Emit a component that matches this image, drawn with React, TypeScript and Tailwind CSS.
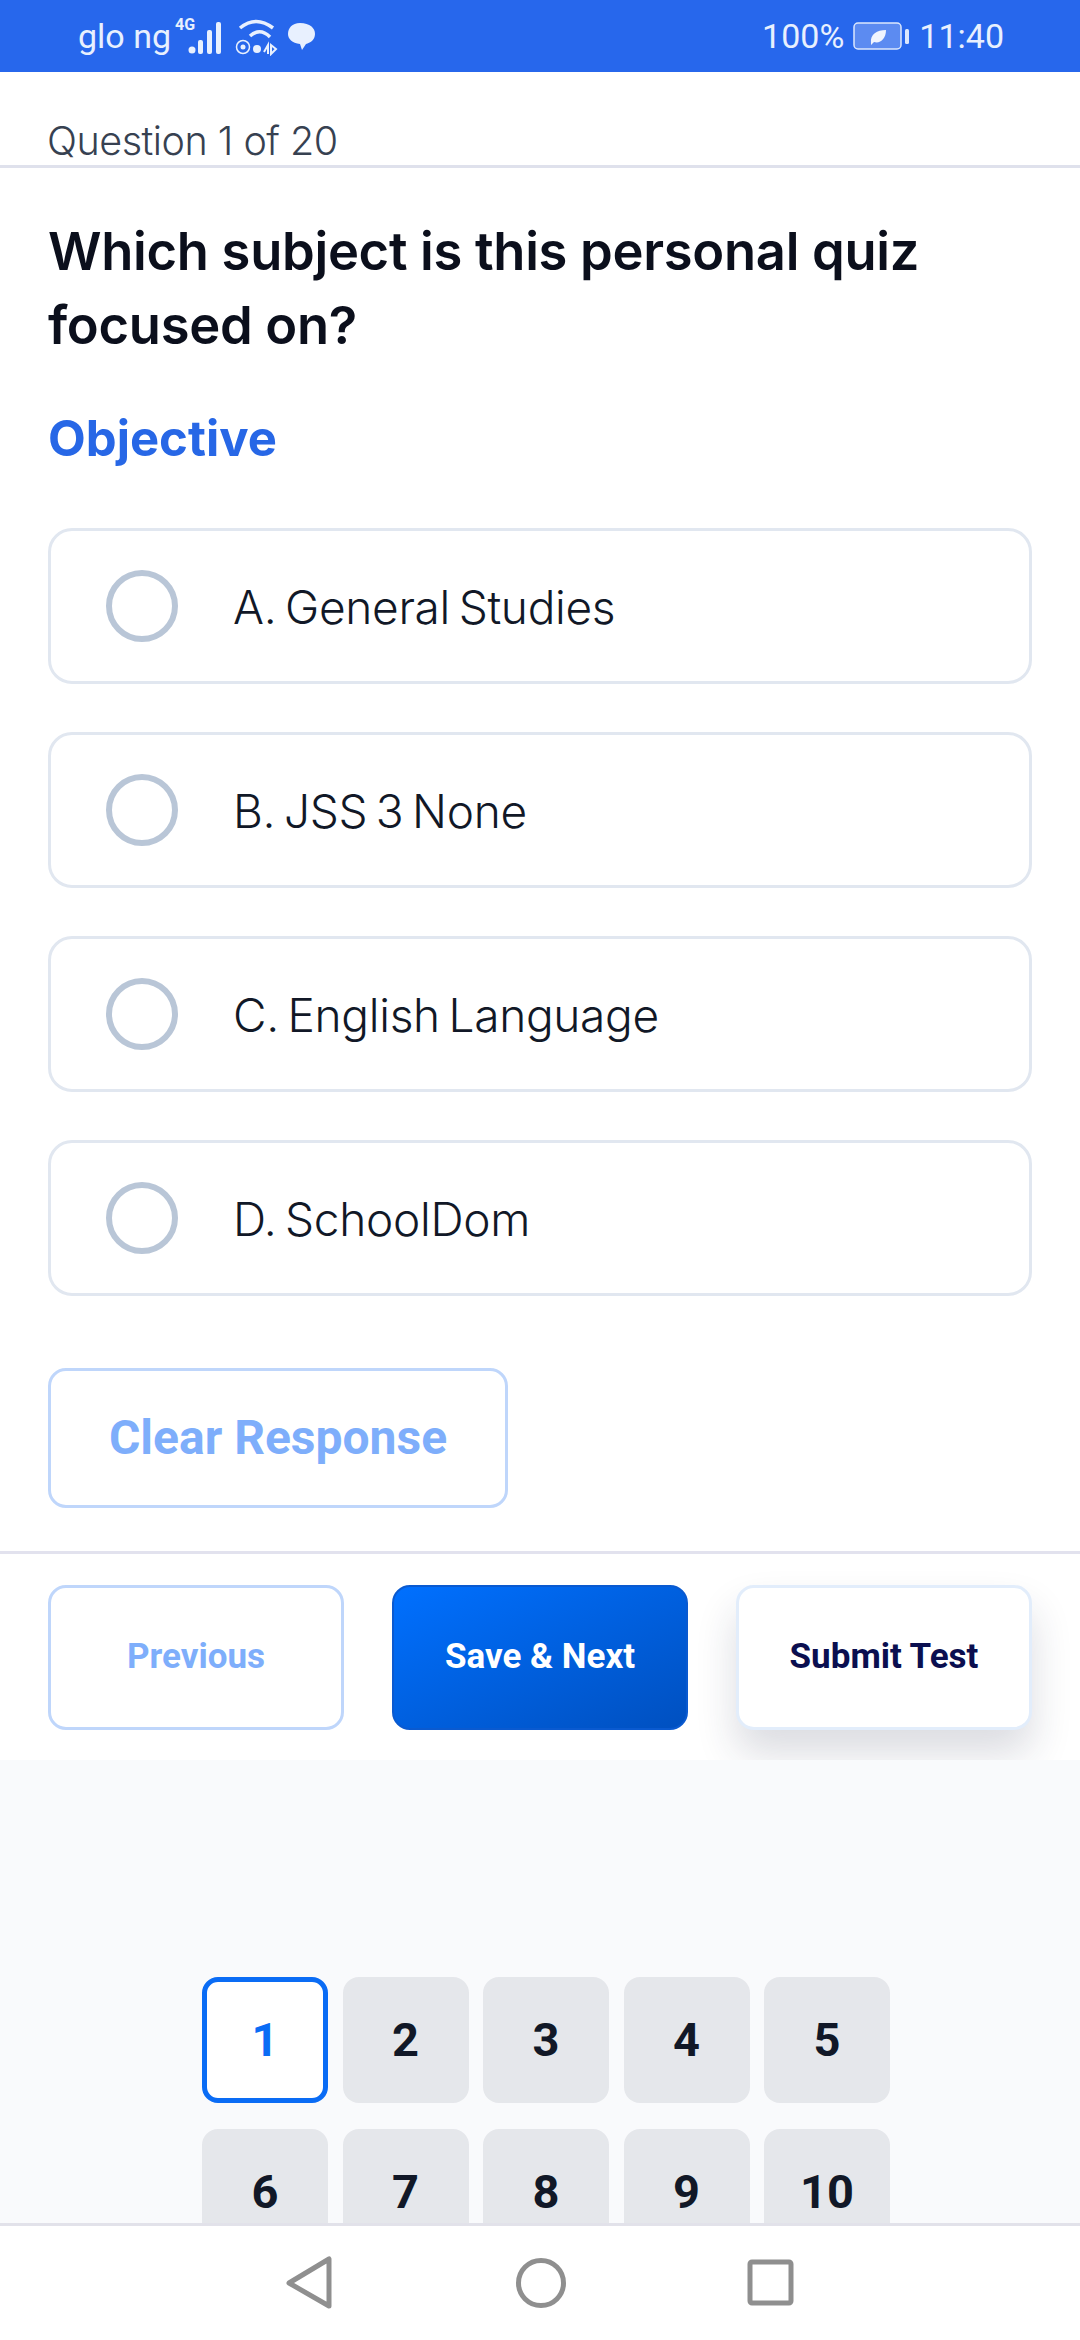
import React from 'react';

const options = ['A. General Studies', 'B. JSS 3 None', 'C. English Language', 'D. SchoolDom'];
const numbers = [1, 2, 3, 4, 5, 6, 7, 8, 9, 10];

const StatusBar: React.FC = () => (
  <div className="h-[72px] shrink-0 bg-[#2767ec] flex items-center justify-between pl-[78px] pr-[76px] text-[#e8f0fe] font-['Roboto',sans-serif] text-[34px]">
    <div className="flex items-center">
      <span className="leading-none">glo ng</span>
      <svg width="84" height="40" viewBox="0 0 84 40" className="ml-[4px]" fill="#e8f0fe">
        <text x="0" y="14" fontSize="16" fontWeight="700" fontFamily="Roboto, sans-serif">4G</text>
        <circle cx="17" cy="34" r="3.5" />
        <rect x="23" y="24" width="5" height="14" rx="2" />
        <rect x="32" y="14" width="5" height="24" rx="2" />
        <rect x="41" y="6" width="5" height="32" rx="2" />
      </svg>
      <svg width="44" height="40" viewBox="0 0 44 40" className="-ml-[25px]" fill="none" stroke="#e8f0fe">
        <path d="M6 12 Q22 -1 39 12" strokeWidth="3.5" />
        <path d="M16 20 Q26 11 36 21" strokeWidth="3.5" />
        <circle cx="9" cy="31" r="6.5" strokeWidth="1.5" />
        <circle cx="9" cy="31" r="2.5" fill="#e8f0fe" stroke="none" />
        <circle cx="23" cy="33" r="4" fill="#e8f0fe" stroke="none" />
        <path d="M30 36 L34 29 V38 M37 29 V38 L42 33 Z" strokeWidth="2" />
      </svg>
      <svg width="28" height="28" viewBox="0 0 28 28" className="ml-[9px]" fill="#e8f0fe">
        <path d="M13 1 C23 1 28 6 28 12 C28 18 23 21 19 22 L15 28 L13 22 C5 21 1 17 1 12 C1 6 5 1 13 1 Z" />
      </svg>
    </div>
    <div className="flex items-center">
      <span className="leading-none">100%</span>
      <svg width="58" height="30" viewBox="0 0 58 30" className="ml-[9px]">
        <rect x="1" y="2" width="47" height="26" rx="4" fill="#5c8bf1" stroke="#dbe7fd" strokeWidth="1.5" />
        <rect x="52" y="8" width="4" height="15" rx="1.5" fill="#dbe7fd" />
        <path d="M18 22 C17 13 24 9 33 9 C33 18 27 23 21 21 L18 24 Z" fill="#f1f5fe" />
      </svg>
      <span className="ml-[8px] leading-none">11:40</span>
    </div>
  </div>
);

const NavBar: React.FC = () => (
  <div className="h-[114px] shrink-0 bg-white flex items-center">
    <div className="flex w-full justify-center gap-[160px] pl-[2px]">
      <svg width="70" height="60" viewBox="0 0 70 60" fill="none" stroke="#8f8f8f" strokeWidth="5" strokeLinejoin="round">
        <path d="M53 6 V53 L13 30 Z" />
      </svg>
      <svg width="70" height="60" viewBox="0 0 70 60" fill="none" stroke="#8f8f8f" strokeWidth="5">
        <circle cx="35" cy="30" r="22.5" />
      </svg>
      <svg width="70" height="60" viewBox="0 0 70 60" fill="none" stroke="#8f8f8f" strokeWidth="5" strokeLinejoin="round">
        <rect x="14" y="9" width="41" height="41" rx="2" />
      </svg>
    </div>
  </div>
);

export default function App() {
  return (
    <div className="w-[1080px] h-[2340px] flex flex-col overflow-hidden bg-white font-['Inter',sans-serif]">
      <StatusBar />

      <div className="h-[96px] shrink-0 border-b-[3px] border-[#dfe1ec] px-[48px] pb-[1px] flex items-end">
        <span className="text-[39.5px] leading-[46px] text-[#374151] font-light tracking-[-0.5px] -ml-[1px]">Question 1 of 20</span>
      </div>

      <div className="px-[48px] pt-[46px]">
        <h1 className="text-[52.5px] leading-[74px] font-semibold text-[#0b0f1c] tracking-[-0.3px]">
          Which subject is this personal quiz focused on?
        </h1>
        <p className="mt-[47px] text-[49px] leading-[60px] font-bold text-[#2767e6]">Objective</p>

        <div className="mt-[59px] flex flex-col gap-[48px]">
          {options.map((o) => (
            <div key={o} className="h-[156px] rounded-[24px] border-[3px] border-[#e1e7f0] flex items-center pl-[55px]">
              <span className="w-[72px] h-[72px] rounded-full border-[6px] border-[#b9c6d7]" />
              <span className="ml-[55px] pt-[2px] text-[46px] font-light text-[#111827] tracking-[-0.3px] [word-spacing:-4px]">{o}</span>
            </div>
          ))}
        </div>

        <button
          type="button"
          className="mt-[72px] w-[460px] h-[140px] rounded-[18px] border-[3px] border-[#bfd6fb] text-[48px] font-bold text-[#7eaefb] font-['Roboto',sans-serif]"
        >
          Clear Response
        </button>
      </div>

      <div className="mt-[43px] h-[209px] shrink-0 border-t-[3px] border-[#e2e2ee] px-[48px] pt-[31px] grid grid-cols-3 gap-[48px] items-start">
        <button
          type="button"
          className="h-[145px] rounded-[18px] border-[3px] border-[#bfd6fb] bg-white text-[35px] font-bold text-[#7eaefb] font-['Roboto',sans-serif]"
        >
          Previous
        </button>
        <button
          type="button"
          className="h-[145px] rounded-[18px] border-[2px] border-[#0a5ad0] bg-gradient-to-br from-[#0070ff] to-[#0050c0] text-[35px] font-bold text-white font-['Roboto',sans-serif]"
        >
          Save &amp; Next
        </button>
        <button
          type="button"
          className="h-[145px] rounded-[18px] border-[3px] border-[#e2edfb] bg-white text-[35px] font-bold text-[#0b0f50] font-['Roboto',sans-serif] shadow-[0_24px_40px_rgba(30,40,70,0.16)]"
        >
          Submit Test
        </button>
      </div>

      <div className="flex-1 min-h-0 overflow-hidden bg-[#f9fafc] flex justify-center pl-[12px] pt-[217px]">
        <div className="grid grid-cols-5 gap-x-[14.5px] gap-y-[26px] w-[688px] h-fit">
          {numbers.map((n) => (
            <div
              key={n}
              className={
                n === 1
                  ? "h-[126px] rounded-[16px] border-[5px] border-[#0a6cf5] bg-white flex items-center justify-center text-[47px] font-bold text-[#0a6cf5] font-['Roboto',sans-serif]"
                  : "h-[126px] rounded-[16px] bg-[#e5e7eb] flex items-center justify-center text-[47px] font-bold text-[#111827] font-['Roboto',sans-serif]"
              }
            >
              {n}
            </div>
          ))}
        </div>
      </div>

      <div className="h-[3px] shrink-0 bg-[#e2e2ea]" />
      <NavBar />
    </div>
  );
}
